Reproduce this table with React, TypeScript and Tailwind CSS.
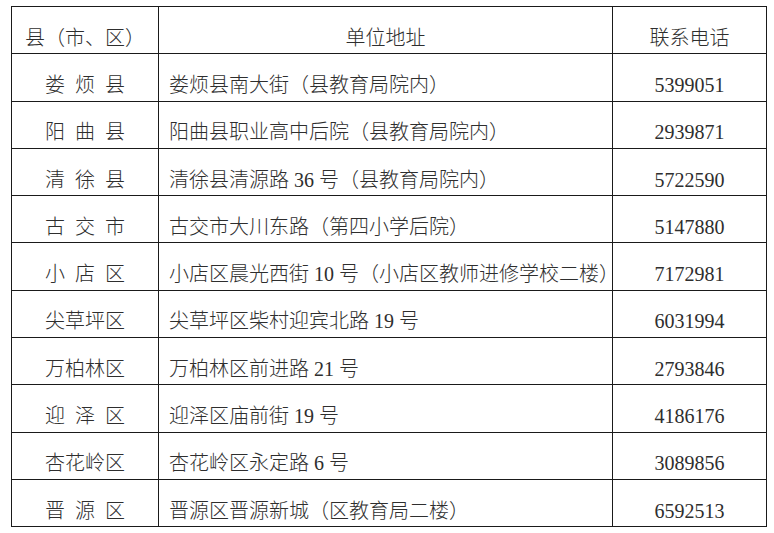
import React from 'react';

interface Row {
  county: string;
  address: string;
  phone: string;
}

const rows: Row[] = [
  { county: '娄  烦  县', address: '娄烦县南大街（县教育局院内）', phone: '5399051' },
  { county: '阳  曲  县', address: '阳曲县职业高中后院（县教育局院内）', phone: '2939871' },
  { county: '清  徐  县', address: '清徐县清源路 36 号（县教育局院内）', phone: '5722590' },
  { county: '古  交  市', address: '古交市大川东路（第四小学后院）', phone: '5147880' },
  { county: '小  店  区', address: '小店区晨光西街 10 号（小店区教师进修学校二楼）', phone: '7172981' },
  { county: '尖草坪区', address: '尖草坪区柴村迎宾北路 19 号', phone: '6031994' },
  { county: '万柏林区', address: '万柏林区前进路 21 号', phone: '2793846' },
  { county: '迎  泽  区', address: '迎泽区庙前街 19 号', phone: '4186176' },
  { county: '杏花岭区', address: '杏花岭区永定路 6 号', phone: '3089856' },
  { county: '晋  源  区', address: '晋源区晋源新城（区教育局二楼）', phone: '6592513' },
];

const cell = 'border border-[#1a1a1a] h-[47.3px] align-middle pt-[15px] leading-[20px] whitespace-pre';

const App: React.FC = () => {
  return (
    <div
      className="w-[774px] h-[533px] bg-white pt-[6px] pl-[11px] text-[20px] text-[#2e2e2e] font-light"
      style={{ fontFamily: '"Liberation Serif", "Noto Sans CJK SC", serif' }}
    >
      <table className="table-fixed border-collapse w-[755px]">
        <colgroup>
          <col className="w-[147px]" />
          <col className="w-[454px]" />
          <col className="w-[154px]" />
        </colgroup>
        <thead>
          <tr>
            <th className={`${cell} font-light text-center`}>县（市、区）</th>
            <th className={`${cell} font-light text-center`}>单位地址</th>
            <th className={`${cell} font-light text-center`}>联系电话</th>
          </tr>
        </thead>
        <tbody>
          {rows.map((r) => (
            <tr key={r.phone}>
              <td className={`${cell} text-center`}>{r.county}</td>
              <td className={`${cell} text-left pl-[10px]`}>{r.address}</td>
              <td className={`${cell} text-center`}>{r.phone}</td>
            </tr>
          ))}
        </tbody>
      </table>
    </div>
  );
};

export default App;
